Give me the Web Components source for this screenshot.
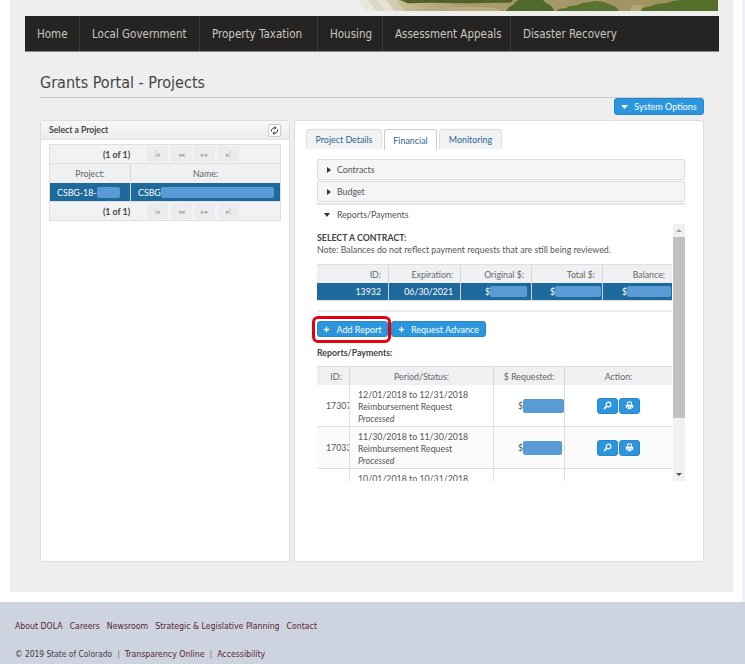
<!DOCTYPE html>
<html lang="en"><head><meta charset="utf-8"><title>Grants Portal</title>
<style>
html,body{margin:0;padding:0;background:#fff}
body{width:745px;height:664px;overflow:hidden;font-family:Lato,"Liberation Sans",sans-serif;color:#444}
</style></head><body>
<portal-page></portal-page>
<script>
const LATO='Lato,"Liberation Sans",sans-serif';
const TAH='"DejaVu Sans Condensed","DejaVu Sans",sans-serif';
function def(name,html,init){
  customElements.define(name,class extends HTMLElement{
    constructor(){super();const r=this.attachShadow({mode:'open'});r.innerHTML=typeof html==='function'?html(this):html;}
    connectedCallback(){init&&init(this);}
  });
}
def('site-banner',`<style>:host{display:block;height:11px;margin-left:15px;width:693px}svg{display:block}</style>
<svg width="693" height="11" viewBox="25 0 693 11">
<defs>
<linearGradient id="w" x1="0" x2="1"><stop offset="0" stop-color="#c9bf95"/><stop offset=".2" stop-color="#ab9e6e"/><stop offset="1" stop-color="#9c8f5c"/></linearGradient>
<filter id="n" x="0" y="0" width="100%" height="100%"><feTurbulence type="fractalNoise" baseFrequency=".4" numOctaves="2" seed="4"/><feColorMatrix values="0 0 0 0 .1  0 0 0 0 .14  0 0 0 0 .03  2 0 0 0 -.8"/><feComposite in2="SourceAlpha" operator="in" result="d"/><feMerge><feMergeNode in="SourceGraphic"/><feMergeNode in="d"/></feMerge></filter>
</defs>
<polygon points="358,0 368,0 376,11 366,11" fill="#e9e7dd"/>
<polygon points="368,0 377,0 385,11 376,11" fill="#dcd8c6"/>
<polygon points="377,0 386,0 394,11 385,11" fill="#e6e3d5"/>
<polygon points="386,0 396,0 404,11 394,11" fill="#d3ccb0"/>
<polygon points="396,0 718,0 718,11 404,11" fill="url(#w)"/>
<g filter="url(#n)">
<path d="M400 0H513L511 2.500 470 3.200 430 2.800 408 3.200z" fill="#4f5f2a"/>
<path d="M506 11l3-4 4-2 2-3 4-2h24l3 3 4 2 3 3 1 3z" fill="#506a2a"/>
<path d="M556 11l3-2 7-1 4-2 8-1 4-2 8-1 5-1 8 1 6 2 7 3 3 4z" fill="#5c7433"/>
<path d="M641 11l2-3 8-2 6-2 10-1 6-2 10-1h35v11z" fill="#55722c"/>
</g>
<path d="M445 7q25-1 50 1l5 3H450z" fill="#b8ac80"/>
<path d="M632 5h11l-3 6h-10z" fill="#b3a778"/>
</svg>`);
def('site-nav',`<style>
:host{display:flex;margin:5px 0 0 15px;width:694px;height:35px;background:#252423;border-bottom:1px solid #8a8a8a}
a{display:flex;align-items:center;box-sizing:border-box;height:35px;font:11.5px ${TAH};color:#c9c7c0;text-decoration:none;padding:0 0 0 12px;border-right:1px solid #3a3937;white-space:nowrap}
a:last-child{border:0}
</style><a style="width:55px">Home</a><a style="width:120px">Local Government</a><a style="width:118px">Property Taxation</a><a style="width:65px">Housing</a><a style="width:128px">Assessment Appeals</a><a>Disaster Recovery</a>`);
def('page-title',`<style>:host{display:block;margin:21px 0 0 30px;width:664px;height:24px;border-bottom:1px solid #ccc;font:16px/19px ${TAH};color:#444}</style><slot></slot>`);
def('blue-button',`<style>:host{display:inline-flex;align-items:center;justify-content:center;box-sizing:border-box;background:#2b95dd;border:1px solid #2a86c8;border-radius:3px;color:#fff;font:9px ${LATO};white-space:nowrap;gap:6px}
svg{display:block;flex:none}</style><slot name="icon"></slot><slot></slot>`);
def('work-panel',`<style>:host{display:flex;flex-direction:column;box-sizing:border-box;background:#fff;border:1px solid #ddd;border-radius:3px}</style><slot></slot>`);
def('pager-button',`<style>:host{display:flex;align-items:center;justify-content:center;width:21px;height:16px;background:#ebecee;border-radius:2px;color:#aaa;font:7px ${LATO};letter-spacing:-.5px}</style><slot></slot>`);
def('grid-pager',`<style>:host{display:flex;align-items:center;box-sizing:border-box;height:20px;background:#f1f2f3;border:1px solid #dfdfe1;font:bold 8.8px ${LATO};color:#444;padding-left:44px}
span{width:45px;text-align:center;margin-right:8px;white-space:nowrap}
div{display:flex;gap:2.500px}
</style><span>(1 of 1)</span><div><pager-button>|◂</pager-button><pager-button>◂◂</pager-button><pager-button>▸▸</pager-button><pager-button>▸|</pager-button></div>`);
def('mask-bar',`<style>:host{display:inline-block;height:var(--h,12px);width:var(--w,40px);background:#5b9bd5;border-radius:2px;vertical-align:middle}</style>`);
def('project-list',`<style>
:host{display:block;width:232px;margin:4px 0 0 8px;font:8.8px ${LATO};color:#666}
.h,.r{display:grid;grid-template-columns:80px 1fr;box-sizing:border-box;height:19px;border:solid #dfdfe1;border-width:0 1px}
.h{background:#eef0f2}
.h div{display:flex;align-items:center;justify-content:center}
.h div+div,.r div+div{border-left:1px solid #d5d5d8}
.r{background:#1f6a9c;color:#fff;height:18px}
.r div{display:flex;align-items:center;padding-left:7px;white-space:nowrap;overflow:hidden}
</style><grid-pager></grid-pager>
<div class="h"><div>Project:</div><div>Name:</div></div>
<div class="r"><div>CSBG-18-<mask-bar style="--w:23px;--h:11px;flex:none"></mask-bar></div><div>CSBG<mask-bar style="--w:113px;--h:11px;flex:none"></mask-bar></div></div>
<grid-pager></grid-pager>`);
def('panel-head',`<style>:host{display:flex;align-items:center;justify-content:space-between;box-sizing:border-box;height:19px;padding:0 8px 0 8px;background:linear-gradient(#f8f8f8,#ececed);border-bottom:1px solid #e2e2e2;font:bold 8.6px ${LATO};color:#444}
b{display:flex;align-items:center;justify-content:center;box-sizing:border-box;width:13px;height:13px;background:#fff;border:1px solid #ccc;border-radius:2px}</style>
<span><slot></slot></span><b><svg width="9" height="9" viewBox="0 0 9 9" fill="none" stroke="#333" stroke-width="1"><path d="M1.500 5.500a3 3 0 0 1 4-3.500M7.500 3.500a3 3 0 0 1-4 3.500"/><path d="M5 .5l1 1.600-1.600 1M4 8.500L3 6.900l1.600-1"/></svg></b>`);
def('tab-strip',`<style>:host{display:flex;gap:2px;margin:8px 0 0 11px;height:20px;font:8.9px ${LATO};color:#2a6496}
div{display:flex;align-items:center;justify-content:center;box-sizing:border-box;height:20px;background:#f2f3f4;border:1px solid #dedede;border-bottom:0;border-radius:3px 3px 0 0}
.on{background:#fff;border-color:#ccc;height:21px}
</style><div style="width:76px">Project Details</div><div class="on" style="width:53px">Financial</div><div style="width:63px">Monitoring</div>`);
def('fold-row',`<style>:host{display:flex;align-items:center;box-sizing:border-box;width:368px;height:21px;margin-bottom:1px;background:#f4f5f6;border:1px solid #dcdcdc;border-radius:2px;font:8.8px ${LATO};color:#555;padding-left:9px}
:host([open]){background:#fff;border-width:2px 0 0;border-color:#e2e2e2;border-radius:0;margin:0;padding-left:7px}
i{width:0;height:0;margin-right:6px;border-left:4px solid #333;border-top:3px solid transparent;border-bottom:3px solid transparent}
:host([open]) i{border-top:4px solid #333;border-bottom:0;border-left:3px solid transparent;border-right:3px solid transparent;margin-right:7px}
</style><i></i><slot></slot>`);
def('fake-scroll',`<style>:host{display:flex;flex-direction:column;width:12px;height:100%;background:#f1f1f1;flex:none;align-items:stretch}
.a{height:13px;display:flex;align-items:center;justify-content:center}
.t{flex:none;height:181px;background:#c1c1c1}.g{flex:1}
i{border-left:3px solid transparent;border-right:3px solid transparent}
</style><div class="a"><i style="border-bottom:3px solid #a0a0a0"></i></div><div class="t"></div><div class="g"></div><div class="a"><i style="border-top:3px solid #505050"></i></div>`);
def('contract-table',`<style>:host{display:block;width:355px;margin-top:8px;font:8.8px ${LATO};color:#666}
.g{display:grid;grid-template-columns:71px 72px 71px 71px 70px;box-sizing:border-box}
.g div{display:flex;align-items:center;justify-content:flex-end;padding-right:7px;border-left:1px solid #d5d5d8;box-sizing:border-box;white-space:nowrap;overflow:hidden}
.g div:first-child{border:0}
.h{height:19px;background:#eef0f2;border-top:1px solid #dfdfe1}
.r{height:18px;background:#1f6a9c;color:#fff;border-bottom:1px solid #dfdfe1}
.r .m{justify-content:flex-start;padding-right:0}
.r .m mask-bar{flex:none}
</style>
<div class="g h"><div>ID:</div><div>Expiration:</div><div>Original $:</div><div>Total $:</div><div>Balance:</div></div>
<div class="g r"><div>13932</div><div>06/30/2021</div><div class="m" style="padding-left:24px"><span>$</span><mask-bar style="--w:37px;--h:11px"></mask-bar></div><div class="m" style="padding-left:18px"><span>$</span><mask-bar style="--w:46px;--h:11px"></mask-bar></div><div class="m" style="padding-left:19px"><span>$</span><mask-bar style="--w:44px;--h:11px"></mask-bar></div></div>`);
const plus=`<svg slot="icon" width="7" height="7" viewBox="0 0 7 7"><path d="M3.500 .8v5.400M.8 3.500h5.400" stroke="#fff" stroke-width="1.300"/></svg>`;
def('report-actions',`<style>:host{display:flex;gap:3px;margin-top:9px;position:relative;height:16px}
.ring{position:absolute;left:-5px;top:-5px;width:79px;height:27px;box-sizing:border-box;border:3px solid #e3000f;border-radius:6px}
blue-button{height:16px}
</style>
<blue-button style="width:71px">${plus}Add Report</blue-button><blue-button style="width:95px">${plus}Request Advance</blue-button><div class="ring"></div>`);
const search=`<svg width="9" height="9" viewBox="0 0 9 9" fill="none" stroke="#fff"><circle cx="5.500" cy="3.500" r="2.300" stroke-width="1.300"/><path d="M3.800 5.200L1 8" stroke-width="1.700"/></svg>`;
const printer=`<svg width="9" height="9" viewBox="0 0 9 9"><path d="M2.500 3.500V1h4v2.500" fill="none" stroke="#fff"/><rect x=".8" y="3.500" width="7.400" height="3.500" rx="1" fill="#fff"/><rect x="2.300" y="6" width="4.400" height="2.300" fill="#fff" stroke="#2b95dd" stroke-width=".5"/></svg>`;
const COLS='32px 144px 71px 108px';
def('report-row',(el)=>`<style>:host{display:grid;grid-template-columns:${COLS};height:42px;border-bottom:1px solid #ddd;box-sizing:border-box;font:8.8px/12px ${LATO};color:#555;background:var(--bg,#fff)}
div.c{border-left:1px solid #ddd;box-sizing:border-box;display:flex;align-items:center;overflow:hidden}
div.id{border:0;padding-left:9px;white-space:nowrap}
div.p{display:block;padding:4px 0 0 8px;white-space:nowrap}
.m{padding-left:24px;white-space:nowrap}
.m mask-bar{flex:none}
.a{justify-content:center;gap:1px}
blue-button{width:21px;height:16px}
</style><div class="c id"><slot name="id"></slot></div><div class="c p"><slot name="period"></slot></div><div class="c m">$<mask-bar style="--w:${el.getAttribute('w')||41}px;--h:14px"></mask-bar></div>
<div class="c a"><blue-button>${search}</blue-button><blue-button>${printer}</blue-button></div>`);
def('reports-table',`<style>:host{display:block;width:355px;font:8.8px ${LATO};color:#666}
.h{display:grid;grid-template-columns:${COLS};height:19px;background:#eef0f2;border-top:1px solid #dfdfe1;box-sizing:border-box}
.h div{display:flex;align-items:center;justify-content:center;border-left:1px solid #d5d5d8}.h div:first-child{border:0;padding-left:6px}
.cut{display:grid;grid-template-columns:${COLS};height:16px;font:8.8px/12px ${LATO};color:#555}
.cut div{border-left:1px solid #ddd;padding:4px 0 0 8px;white-space:nowrap}.cut div:first-child{border:0}
</style><div class="h"><div>ID:</div><div>Period/Status:</div><div>$ Requested:</div><div>Action:</div></div>
<slot></slot>
<div class="cut"><div></div><div>10/01/2018 to 10/31/2018</div><div></div><div></div></div>`);
const lines=(a)=>`<div slot="period"><span style="display:block">${a}</span><span style="display:block">Reimbursement Request</span><em style="display:block">Processed</em></div>`;
def('contract-pane',`<style>:host{display:flex;box-sizing:border-box;height:257px;width:374px;overflow:hidden;margin-left:-6px;padding-left:6px}
.s{flex:1;min-width:0;font:8.8px ${LATO};color:#555}
.t{font-weight:bold;color:#444;margin-top:8px;line-height:11px}
.n{line-height:13px}
hr{border:0;border-top:2px solid #ececec;margin:9px 0 0;width:355px}
.l{font-weight:bold;color:#444;margin:10px 0 8px;line-height:11px}
</style><div class="s"><div class="t">SELECT A CONTRACT:</div><div class="n">Note: Balances do not reflect payment requests that are still being reviewed.</div>
<contract-table></contract-table><hr><report-actions></report-actions><div class="l">Reports/Payments:</div>
<reports-table>
<report-row w="41"><span slot="id">17307</span>${lines('12/01/2018 to 12/31/2018')}</report-row>
<report-row w="39" style="--bg:#fbfbfb"><span slot="id">17033</span>${lines('11/30/2018 to 11/30/2018')}</report-row>
</reports-table></div><fake-scroll></fake-scroll>`);
def('site-footer',`<style>:host{display:block;margin-top:10px;height:62px;background:#cdd3df;box-sizing:border-box;padding:18px 0 0 15px;font:8.7px ${TAH};color:#5a1f33}
.l{display:flex;gap:7px;height:12px;line-height:12px}.b{display:flex;gap:5px;margin-top:16px;line-height:12px;color:#4a3a44}
.b span{font-size:8.4px}.b a{color:#5a1f33}.b i{font-style:normal;color:#777}
</style><div class="l"><span>About DOLA</span><span>Careers</span><span>Newsroom</span><span>Strategic &amp; Legislative Planning</span><span>Contact</span></div>
<div class="b"><span>© 2019 State of Colorado</span><i>|</i><a>Transparency Online</a><i>|</i><a>Accessibility</a></div>`);
def('portal-page',`<style>:host{display:block;width:745px;height:664px;background:linear-gradient(90deg,#fff 742px,#eef2f8 742px)}
.shell{margin-left:10px;width:723px;height:592px;background:#eee;box-sizing:border-box;overflow:hidden}
.opt{display:flex;justify-content:flex-end;width:694px;height:18px}
.cols{display:flex;gap:4px;margin:4px 0 0 30px;height:442px}
.left{width:250px}.right{width:410px}
.pad{padding:10px 0 0 22px}
</style><div class="shell"><site-banner></site-banner><site-nav></site-nav><page-title>Grants Portal - Projects</page-title>
<div class="opt"><blue-button style="width:90px;height:17px"><svg slot="icon" width="7" height="4" viewBox="0 0 7 4"><path d="M0 0h7L3.500 4z" fill="#fff"/></svg>System Options</blue-button></div>
<div class="cols"><work-panel class="left"><panel-head>Select a Project</panel-head><project-list></project-list></work-panel>
<work-panel class="right"><tab-strip></tab-strip><div class="pad"><fold-row>Contracts</fold-row><fold-row>Budget</fold-row><fold-row open>Reports/Payments</fold-row><contract-pane></contract-pane></div></work-panel></div></div>
<site-footer></site-footer>`);
</script></body></html>
